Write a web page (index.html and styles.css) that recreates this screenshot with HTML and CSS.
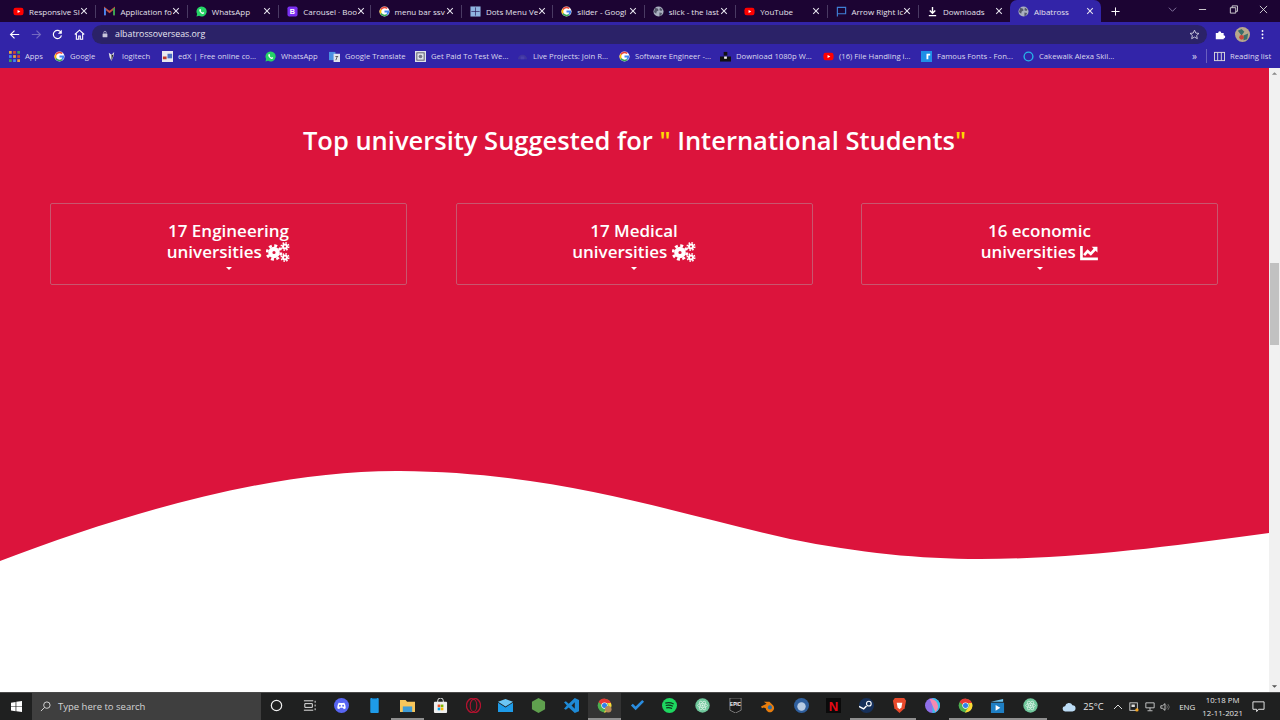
FILE: index.html
```html
<!DOCTYPE html>
<html lang="en">
<head>
  <meta charset="UTF-8">
  <title>Albatross</title>
  <link rel="stylesheet" href="styles.css">
</head>
<body>
<svg class="defs" width="0" height="0">
  <symbol id="i-google" viewBox="0 0 24 24">
    <circle cx="12" cy="12" r="11" fill="#fff"/>
    <path d="M12 5a7 7 0 0 1 4.700 1.800L19 4.400A11 11 0 0 0 2.800 6.500l3 2.300A7 7 0 0 1 12 5z" fill="#ea4335"/>
    <path d="M5.800 8.800l-3-2.300a11 11 0 0 0 0 11l3-2.300a7 7 0 0 1 0-6.400z" fill="#fbbc05"/>
    <path d="M5.800 15.200l-3 2.300A11 11 0 0 0 19 19.600l-2.800-2.200A7 7 0 0 1 5.800 15.200z" fill="#34a853"/>
    <path d="M12 10v4h6a6 6 0 0 1-1.800 3.400l2.800 2.200a11 11 0 0 0 3-9.600H12z" fill="#4285f4"/>
  </symbol>
  <symbol id="i-youtube" viewBox="0 0 24 24">
    <rect x="1" y="4" width="22" height="16" rx="5" fill="#f00"/>
    <path d="M10 8.500v7l6-3.500z" fill="#fff"/>
  </symbol>
  <symbol id="i-whatsapp" viewBox="0 0 24 24">
    <path d="M12 1a11 11 0 0 0-9.500 16.500L1 23l5.700-1.500A11 11 0 1 0 12 1z" fill="#25d366"/>
    <path d="M8.500 6.500c-1.800 1.200-1.800 3.500-.3 5.800 1.600 2.500 4.200 4.700 6.700 4.900 1.600.1 3-1 3-2.500l-2.700-1.400-1.200 1.300c-1.500-.6-3-2-3.800-3.700l1-1.200-1.200-2.900z" fill="#fff"/>
  </symbol>
  <symbol id="i-globe" viewBox="0 0 24 24">
    <circle cx="12" cy="12" r="11" fill="#aab0c0"/>
    <path d="M5 4l6 2 1 4-4 2-1 5-5-4zM15 3l6 5-3 3-4-2zM14 14l6 1-3 6-3 1z" fill="#55586a"/>
  </symbol>
  <symbol id="i-chrome" viewBox="0 0 24 24">
    <circle cx="12" cy="12" r="11" fill="#4caf50"/>
    <path d="M2.500 6.500A11 11 0 0 1 22.300 8H12a4 4 0 0 0-4 3z" fill="#e53935"/>
    <path d="M22.300 8A11 11 0 0 1 11 23l5-7.500a4 4 0 0 0-.5-7.500z" fill="#fdd835"/>
    <circle cx="12" cy="12" r="5" fill="#fff"/>
    <circle cx="12" cy="12" r="4" fill="#2f80ed"/>
  </symbol>
  <symbol id="i-atom" viewBox="0 0 24 24">
    <circle cx="12" cy="12" r="11.500" fill="#6fc79b"/>
    <g fill="none" stroke="#e4f5ec" stroke-width="1">
      <ellipse cx="12" cy="12" rx="8" ry="3.200"/>
      <ellipse cx="12" cy="12" rx="8" ry="3.200" transform="rotate(60 12 12)"/>
      <ellipse cx="12" cy="12" rx="8" ry="3.200" transform="rotate(120 12 12)"/>
    </g>
    <circle cx="12" cy="12" r="1.600" fill="#e4f5ec"/>
  </symbol>
  <symbol id="i-close" viewBox="0 0 10 10">
    <path d="M1.500 1.500l7 7M8.500 1.500l-7 7" stroke="#e6e3ee" stroke-width="1.300" fill="none"/>
  </symbol>
  <symbol id="i-gears" viewBox="0 0 24 20">
    <g fill="none" stroke="#fff">
      <circle cx="8" cy="10.500" r="3.700" stroke-width="4.200"/>
      <circle cx="8" cy="10.500" r="6.900" stroke-width="2.600" stroke-dasharray="3 2.420"/>
      <circle cx="19" cy="4.500" r="2" stroke-width="2"/>
      <circle cx="19" cy="4.500" r="3.700" stroke-width="1.600" stroke-dasharray="1.500 1.400"/>
      <circle cx="19" cy="15.500" r="2" stroke-width="2"/>
      <circle cx="19" cy="15.500" r="3.700" stroke-width="1.600" stroke-dasharray="1.500 1.400"/>
    </g>
  </symbol>
  <symbol id="i-chart" viewBox="0 0 20 18">
    <path d="M1.500 1v14.700H20" fill="none" stroke="#fff" stroke-width="3"/>
    <path d="M4.500 11.500l4-4.500 3.500 3 5-5.500" fill="none" stroke="#fff" stroke-width="3"/>
    <path d="M13 2h6.500v6.500z" fill="#fff"/>
  </symbol>
</svg>

<div class="tabstrip">
  <div class="tab"><svg class="fav"><use href="#i-youtube"/></svg><span class="tab-title">Responsive Sl</span><svg class="x"><use href="#i-close"/></svg></div>
  <div class="tab">
    <svg class="fav" viewBox="0 0 24 24"><path d="M2 20V5l10 8 10-8v15" fill="none" stroke="#c5503f" stroke-width="4"/><path d="M2 20V5" stroke="#4285f4" stroke-width="4"/><path d="M22 20V5" stroke="#34a853" stroke-width="4"/></svg>
    <span class="tab-title">Application fo</span><svg class="x"><use href="#i-close"/></svg>
  </div>
  <div class="tab"><svg class="fav"><use href="#i-whatsapp"/></svg><span class="tab-title">WhatsApp</span><svg class="x"><use href="#i-close"/></svg></div>
  <div class="tab">
    <svg class="fav" viewBox="0 0 24 24"><rect x="1" y="1" width="22" height="22" rx="4" fill="#7b2ff2"/><text x="12" y="18" class="svg-letter" font-size="16" fill="#fff">B</text></svg>
    <span class="tab-title">Carousel · Boo</span><svg class="x"><use href="#i-close"/></svg>
  </div>
  <div class="tab"><svg class="fav"><use href="#i-google"/></svg><span class="tab-title">menu bar ssv</span><svg class="x"><use href="#i-close"/></svg></div>
  <div class="tab">
    <svg class="fav" viewBox="0 0 24 24"><rect x="1" y="1" width="22" height="22" fill="#8fb4e0"/><path d="M3 12h18M12 3v18" stroke="#2a1b5a" stroke-width="1.500"/></svg>
    <span class="tab-title">Dots Menu Ve</span><svg class="x"><use href="#i-close"/></svg>
  </div>
  <div class="tab"><svg class="fav"><use href="#i-google"/></svg><span class="tab-title">slider - Googl</span><svg class="x"><use href="#i-close"/></svg></div>
  <div class="tab"><svg class="fav"><use href="#i-globe"/></svg><span class="tab-title">slick - the last</span><svg class="x"><use href="#i-close"/></svg></div>
  <div class="tab"><svg class="fav"><use href="#i-youtube"/></svg><span class="tab-title">YouTube</span><svg class="x"><use href="#i-close"/></svg></div>
  <div class="tab">
    <svg class="fav" viewBox="0 0 24 24"><path d="M3 23V3h18v14H3" fill="none" stroke="#3f7fd6" stroke-width="2.500"/></svg>
    <span class="tab-title">Arrow Right Ic</span><svg class="x"><use href="#i-close"/></svg>
  </div>
  <div class="tab no-sep">
    <svg class="fav" viewBox="0 0 24 24"><path d="M12 2v13M6 10l6 6 6-6M4 21h16" fill="none" stroke="#fff" stroke-width="3"/></svg>
    <span class="tab-title">Downloads</span><svg class="x"><use href="#i-close"/></svg>
  </div>
  <div class="tab active"><svg class="fav"><use href="#i-globe"/></svg><span class="tab-title">Albatross</span><svg class="x"><use href="#i-close"/></svg></div>
  <svg class="new-tab" viewBox="0 0 10 10"><path d="M5 .500v9M.500 5h9" stroke="#fff" stroke-width="1.100"/></svg>
  <div class="win-controls">
    <svg viewBox="0 0 10 10"><path d="M1 3l4 4 4-4" fill="none" stroke="#8d7fa8"/></svg>
    <svg viewBox="0 0 10 10"><path d="M1 5h8" stroke="#ddd"/></svg>
    <svg viewBox="0 0 10 10"><path d="M1.500 3h6v6h-6zM3.500 3V1h6v6H7.500" fill="none" stroke="#ddd"/></svg>
    <svg viewBox="0 0 10 10"><path d="M1 1l8 8M9 1l-8 8" stroke="#ddd"/></svg>
  </div>
</div>

<div class="toolbar">
  <svg class="tool" viewBox="0 0 14 14"><path d="M13 7H2M7 2L2 7l5 5" fill="none" stroke="#fff" stroke-width="1.500"/></svg>
  <svg class="tool" viewBox="0 0 14 14"><path d="M1 7h11M7 2l5 5-5 5" fill="none" stroke="#7469c0" stroke-width="1.500"/></svg>
  <svg class="tool" viewBox="0 0 14 14"><path d="M11.500 4.500A5.200 5.200 0 1 0 12 8" fill="none" stroke="#fff" stroke-width="1.500"/><path d="M12.500 1v5h-5z" fill="#fff"/></svg>
  <svg class="tool" viewBox="0 0 14 14"><path d="M1 7l6-5.500L13 7M3 6v7h3V9h2v4h3V6" fill="none" stroke="#fff" stroke-width="1.400"/></svg>
  <div class="omnibox">
    <svg class="lock" viewBox="0 0 10 12"><rect x="1" y="5" width="8" height="6.500" rx="1" fill="#c9c6dc"/><path d="M3 5V3.500a2 2 0 0 1 4 0V5" fill="none" stroke="#c9c6dc" stroke-width="1.200"/></svg>
    <span class="url">albatrossoverseas.org</span>
    <svg class="star" viewBox="0 0 14 14"><path d="M7 1.500l1.700 3.700 4 .4-3 2.700.9 4L7 10.300l-3.600 2 .9-4-3-2.700 4-.4z" fill="none" stroke="#d8d5e8" stroke-width="1.100"/></svg>
  </div>
  <svg class="tool ext" viewBox="0 0 14 14"><path d="M1 5h3a2 2 0 0 1 4 0h3v3a2 2 0 0 1 0 4v1H1z" fill="#fff"/></svg>
  <svg class="avatar" viewBox="0 0 16 16"><circle cx="8" cy="8" r="8" fill="#b8a88c"/><path d="M3 4l4-2 3 3-3 4zM9 9l5-2-1 6-4 1z" fill="#3d6f6a"/><circle cx="7" cy="11" r="2.500" fill="#c7453c"/></svg>
  <svg class="tool menu" viewBox="0 0 14 14"><circle cx="7" cy="2.500" r="1.200" fill="#fff"/><circle cx="7" cy="7" r="1.200" fill="#fff"/><circle cx="7" cy="11.500" r="1.200" fill="#fff"/></svg>
</div>

<div class="bookmarks">
  <div class="bm">
    <svg class="bm-ic" viewBox="0 0 12 12">
      <g fill="#e8a33d"><rect width="3" height="3"/><rect x="4.500" width="3" height="3" fill="#d2453c"/><rect x="9" width="3" height="3" fill="#3f9e5a"/></g>
      <g fill="#4285f4"><rect y="4.500" width="3" height="3"/><rect x="4.500" y="4.500" width="3" height="3" fill="#e8a33d"/><rect x="9" y="4.500" width="3" height="3" fill="#d2453c"/></g>
      <g fill="#3f9e5a"><rect y="9" width="3" height="3"/><rect x="4.500" y="9" width="3" height="3" fill="#4285f4"/><rect x="9" y="9" width="3" height="3" fill="#e8a33d"/></g>
    </svg>
    <span>Apps</span>
  </div>
  <div class="bm"><svg class="bm-ic"><use href="#i-google"/></svg><span>Google</span></div>
  <div class="bm"><svg class="bm-ic" viewBox="0 0 12 12"><path d="M3 2l3 2 3-3-1 5-2 5-2-4z" fill="#e8e8e8"/><path d="M6 4l2 0-2 7z" fill="#222"/></svg><span>logitech</span></div>
  <div class="bm"><svg class="bm-ic" viewBox="0 0 12 12"><rect width="12" height="12" fill="#e9e9ef"/><path d="M1 6h4v3H1z" fill="#c0392b"/><path d="M6 3h5v5H6z" fill="#4b6fc4"/></svg><span>edX | Free online co...</span></div>
  <div class="bm"><svg class="bm-ic"><use href="#i-whatsapp"/></svg><span>WhatsApp</span></div>
  <div class="bm"><svg class="bm-ic" viewBox="0 0 12 12"><rect y="1" width="7" height="9" fill="#4a90e2"/><rect x="5" y="3" width="7" height="9" fill="#dfe5ee"/><path d="M7 6h3M9 6l-1.500 4" stroke="#555" fill="none"/></svg><span>Google Translate</span></div>
  <div class="bm"><svg class="bm-ic" viewBox="0 0 12 12"><rect width="12" height="12" fill="#dfe3ea"/><rect x="2" y="2" width="8" height="8" fill="none" stroke="#556"/><circle cx="6" cy="6" r="2" fill="#778"/></svg><span>Get Paid To Test We...</span></div>
  <div class="bm"><svg class="bm-ic" viewBox="0 0 12 12"><path d="M1 9a5 5 0 0 1 10 0z" fill="#3f359f"/><path d="M4 9V6h4v3" fill="#4a40ad"/></svg><span>Live Projects: Join R...</span></div>
  <div class="bm"><svg class="bm-ic"><use href="#i-google"/></svg><span>Software Engineer -...</span></div>
  <div class="bm"><svg class="bm-ic" viewBox="0 0 12 12"><rect x="4" y="1" width="4" height="4" fill="#111"/><rect y="6" width="12" height="5.500" fill="#111"/><rect x="4.500" y="6" width="3" height="2.500" fill="#eee"/></svg><span>Download 1080p W...</span></div>
  <div class="bm"><svg class="bm-ic"><use href="#i-youtube"/></svg><span>(16) File Handling i...</span></div>
  <div class="bm"><svg class="bm-ic" viewBox="0 0 12 12"><rect width="12" height="12" fill="#1f8fe6"/><path d="M6 3h4v2H8v4H6z" fill="#fff"/></svg><span>Famous Fonts - Fon...</span></div>
  <div class="bm"><svg class="bm-ic" viewBox="0 0 12 12"><circle cx="6" cy="6" r="4.800" fill="none" stroke="#27b4e8" stroke-width="1.500"/></svg><span>Cakewalk Alexa Skil...</span></div>
  <span class="bm-more">»</span>
  <div class="bm-reading">
    <svg class="bm-ic" viewBox="0 0 12 12"><rect x=".500" y="1.500" width="11" height="9" fill="none" stroke="#ddd"/><path d="M4 1.500v9M8 1.500v9" stroke="#ddd"/></svg>
    <span>Reading list</span>
  </div>
</div>

<div class="viewport">
  <main class="page">
    <section class="hero">
      <h2 class="hero-title">Top university Suggested for <span class="quote">"</span> International Students<span class="quote">"</span></h2>
      <div class="cards">
        <div class="card">
          <div class="card-label">17 Engineering<br>universities <svg class="card-ic gears"><use href="#i-gears"/></svg></div>
          <span class="caret"></span>
        </div>
        <div class="card">
          <div class="card-label">17 Medical<br>universities <svg class="card-ic gears"><use href="#i-gears"/></svg></div>
          <span class="caret"></span>
        </div>
        <div class="card">
          <div class="card-label">16 economic<br>universities <svg class="card-ic chart"><use href="#i-chart"/></svg></div>
          <span class="caret"></span>
        </div>
      </div>
    </section>
    <svg class="wave" viewBox="0 0 1269 100" preserveAspectRatio="none">
      <path d="M0 96C120 50 270 5 400 6C560 7 680 50 790 74C860 88 920 94 980 94C1080 94 1180 80 1269 68V0H0z" fill="#dc143c"/>
    </svg>
  </main>
  <div class="scrollbar">
    <svg class="sb-arrow" viewBox="0 0 8 5"><path d="M4 1L7 4H1z" fill="#8a8a8a"/></svg>
    <div class="sb-track"><div class="sb-thumb"></div></div>
    <svg class="sb-arrow" viewBox="0 0 8 5"><path d="M4 4L1 1h6z" fill="#555"/></svg>
  </div>
</div>

<footer class="taskbar">
  <div class="start"><svg viewBox="0 0 12 12"><path d="M0 1.800L5 1v4.700H0zM5.800.900L12 0v5.700H5.800zM0 6.400h5v4.700l-5-.8zM5.800 6.400H12V12l-6.200-.9z" fill="#fff"/></svg></div>
  <div class="search">
    <svg viewBox="0 0 12 12"><circle cx="7.500" cy="4.500" r="3.500" fill="none" stroke="#ddd"/><path d="M5 7L1 11" stroke="#ddd"/></svg>
    <span>Type here to search</span>
  </div>
  <div class="apps">
    <div class="app"><svg viewBox="0 0 16 16"><circle cx="8" cy="8" r="5.500" fill="none" stroke="#eee" stroke-width="1.300"/></svg></div>
    <div class="app"><svg viewBox="0 0 16 16"><path d="M2 3h10M2 13h10M3 6h8v4H3zM14 3v2M14 7v2M14 11v2" fill="none" stroke="#eee"/></svg></div>
    <div class="app"><svg viewBox="0 0 16 16"><circle cx="8" cy="8" r="8" fill="#5865f2"/><path d="M3.500 11c0-3 .8-5 1.500-6l2 .4h2l2-.4c.7 1 1.500 3 1.500 6l-2 1-1-1.500H6.500L5.500 12z" fill="#fff"/><circle cx="6.300" cy="8.300" r="1" fill="#5865f2"/><circle cx="9.700" cy="8.300" r="1" fill="#5865f2"/></svg></div>
    <div class="app"><svg viewBox="0 0 16 16"><rect x="3.500" width="9" height="16" rx="1" fill="#1e9be8"/><rect x="5.500" y="0" width="5" height="1.200" fill="#0d5f94"/></svg></div>
    <div class="app active-app"><svg viewBox="0 0 16 16"><path d="M0 2h6l1.500 2H16v11H0z" fill="#f6c65b"/><rect x="3" y="9" width="10" height="6" fill="#3e9cd6"/></svg></div>
    <div class="app"><svg viewBox="0 0 16 16"><path d="M5 5V3a3 3 0 0 1 6 0v2" fill="none" stroke="#eee"/><rect x="1" y="4" width="14" height="12" rx="1" fill="#eee"/><rect x="5" y="7" width="2.800" height="2.800" fill="#f25022"/><rect x="8.300" y="7" width="2.800" height="2.800" fill="#7fba00"/><rect x="5" y="10.300" width="2.800" height="2.800" fill="#00a4ef"/><rect x="8.300" y="10.300" width="2.800" height="2.800" fill="#ffb900"/></svg></div>
    <div class="app"><svg viewBox="0 0 16 16"><ellipse cx="8" cy="8" rx="7.500" ry="8" fill="none" stroke="#b3122f" stroke-width="1.400"/><ellipse cx="8" cy="8" rx="3.500" ry="6.500" fill="none" stroke="#b3122f" stroke-width="1.200"/></svg></div>
    <div class="app"><svg viewBox="0 0 16 16"><path d="M0 5l8 5 8-5v10H0z" fill="#1e9be8"/><path d="M0 4l8-3 8 3-8 5z" fill="#6cc6f5"/></svg></div>
    <div class="app"><svg viewBox="0 0 16 16"><path d="M8 0l7 4v8l-7 4-7-4V4z" fill="#5fa04e"/></svg></div>
    <div class="app"><svg viewBox="0 0 16 16"><path d="M11.500 0L16 2v12l-4.500 2L5 10l-3 2.500L0 11.500 3 8 0 4.500 2 3.500 5 6zm0 4.500L8 8l3.500 3.500z" fill="#1e8ad6"/></svg></div>
    <div class="app active-app wide"><svg viewBox="0 0 16 16"><use href="#i-chrome"/><circle cx="12" cy="12" r="3.500" fill="#b58a5a"/></svg></div>
    <div class="app"><svg viewBox="0 0 16 16"><path d="M1 8l2-2 3 3 7-7 2 2-9 9z" fill="#2a8de0"/></svg></div>
    <div class="app"><svg viewBox="0 0 16 16"><circle cx="8" cy="8" r="8" fill="#1ed760"/><path d="M3.500 5.500c3-1 6-.7 9 .8M4 8c2.500-.7 5.300-.4 7.600.8M4.500 10.500c2-.5 4.300-.3 6.200.7" fill="none" stroke="#0b3b1d" stroke-width="1.200"/></svg></div>
    <div class="app"><svg viewBox="0 0 16 16"><use href="#i-atom"/></svg></div>
    <div class="app"><svg viewBox="0 0 16 16"><path d="M2 0h12v13l-6 3-6-3z" fill="#1b1b1b" stroke="#ddd" stroke-width=".500"/><text x="8" y="8" class="svg-letter" font-size="5" fill="#fff">EPIC</text></svg></div>
    <div class="app"><svg viewBox="0 0 16 16"><path d="M0 9l6-3-3-2h6l3 3a4.500 4.500 0 1 1-7 4l-2-1-2 1z" fill="#e87d0d"/><circle cx="9.500" cy="10" r="2.200" fill="#2a6ea8"/></svg></div>
    <div class="app"><svg viewBox="0 0 16 16"><circle cx="8" cy="8" r="8" fill="#2f5f9e"/><circle cx="8" cy="9" r="4.500" fill="#b7cbe4"/></svg></div>
    <div class="app"><svg viewBox="0 0 16 16"><rect width="16" height="16" fill="#0a0a0a"/><text x="8" y="14" class="svg-letter" font-size="14" fill="#e50914">N</text></svg></div>
    <div class="app active-app"><svg viewBox="0 0 16 16"><circle cx="8" cy="8" r="8" fill="#16305a"/><circle cx="10.500" cy="6" r="2.500" fill="none" stroke="#fff" stroke-width="1.200"/><path d="M0 9l5 2.500 3-3" stroke="#fff" stroke-width="1.500" fill="none"/></svg></div>
    <div class="app active-app"><svg viewBox="0 0 16 16"><path d="M3 0h10l2 3-1.500 8L8 16l-5.500-5L1 3z" fill="#e8492b"/><path d="M5 5h6l-1 5-2 2-2-2z" fill="#fff"/></svg></div>
    <div class="app"><svg viewBox="0 0 16 16"><circle cx="8" cy="8" r="8" fill="#8f6fe8"/><path d="M8 0a8 8 0 0 1 0 16z" fill="#36c2e8"/><path d="M5 1a8 8 0 0 1 6 14L8 8z" fill="#f58ab0"/></svg></div>
    <div class="app active-app"><svg viewBox="0 0 16 16"><use href="#i-chrome"/></svg></div>
    <div class="app active-app"><svg viewBox="0 0 16 16"><path d="M1 4l13-3v3H1z" fill="#6cc6f5"/><rect x="1" y="5" width="14" height="11" fill="#1e7fc4"/><path d="M6 7.500v6l5-3z" fill="#fff"/></svg></div>
    <div class="app active-app"><svg viewBox="0 0 16 16"><use href="#i-atom"/></svg></div>
  </div>
  <div class="tray">
    <svg class="cloud" viewBox="0 0 16 10"><path d="M4 10a3 3 0 0 1-.5-6A4.500 4.500 0 0 1 12 3a3.500 3.500 0 0 1 0 7z" fill="#bcdcf5"/></svg>
    <span class="temp">25°C</span>
    <svg class="tray-ic chev" viewBox="0 0 10 6"><path d="M1 5l4-4 4 4" fill="none" stroke="#ddd"/></svg>
    <svg class="tray-ic" viewBox="0 0 12 12"><rect x="1" y="1" width="9" height="9" fill="none" stroke="#ddd"/><rect x="3" y="3" width="4" height="3" fill="#ddd"/><circle cx="9.500" cy="9.500" r="2" fill="#f5a623"/></svg>
    <svg class="tray-ic" viewBox="0 0 12 12"><path d="M1 1h10v6H1zM6 7v3M3 10.500h6" fill="none" stroke="#ddd"/></svg>
    <svg class="tray-ic last" viewBox="0 0 12 12"><path d="M1 4.500h2L6 2v8L3 7.500H1z" fill="none" stroke="#ddd"/><path d="M8 4a3 3 0 0 1 0 4M9.500 2.500a5 5 0 0 1 0 7" fill="none" stroke="#777"/></svg>
    <span class="lang">ENG</span>
    <div class="clock"><span>10:18 PM</span><span>12-11-2021</span></div>
    <svg class="notif" viewBox="0 0 14 14"><path d="M1 2h12v8H7l-2 2.500V10H1z" fill="none" stroke="#eee"/></svg>
  </div>
</footer>
</body>
</html>
```

FILE: styles.css
```css
* { box-sizing: border-box; }
html, body { height: 100%; }
body {
  margin: 0;
  width: 1280px;
  height: 720px;
  overflow: hidden;
  display: flex;
  flex-direction: column;
  font-family: "Open Sans", "Noto Sans", sans-serif;
  background: #fff;
}
.defs { position: absolute; }
.svg-letter { font-family: "Liberation Sans", sans-serif; font-weight: bold; text-anchor: middle; }

/* browser tabs */
.tabstrip {
  height: 22px;
  display: flex;
  align-items: center;
  padding-left: 5px;
  background: #1c0433;
  color: #e4e1ec;
  font-size: 8px;
}
.tab {
  width: 91.4px;
  height: 13px;
  display: flex;
  align-items: center;
  padding: 0 7px 0 8px;
  border-right: 1px solid #4a3a63;
  flex-shrink: 0;
}
.tab.no-sep { border-right: none; width: 91px; }
.tab.active {
  width: 91px;
  height: 22px;
  background: #3224a8;
  border-right: none;
  border-radius: 7px 7px 0 0;
}
.fav { width: 11px; height: 11px; flex-shrink: 0; }
.tab-title {
  flex: 1;
  margin-left: 5px;
  white-space: nowrap;
}
.x { width: 8px; height: 8px; flex-shrink: 0; }
.new-tab { width: 9px; height: 9px; margin-left: 10px; }
.win-controls {
  margin-left: auto;
  display: flex;
  gap: 21.5px;
  padding-right: 12px;
  margin-top: -4px;
}
.win-controls svg { width: 9px; height: 9px; display: block; }

/* address bar */
.toolbar {
  height: 24px;
  display: flex;
  align-items: center;
  padding-left: 9px;
  background: #3224a8;
}
.tool { width: 11px; height: 11px; margin-right: 10.5px; flex-shrink: 0; }
.omnibox {
  width: 1115px;
  height: 19px;
  margin-left: -3px;
  padding: 0 7px 0 10px;
  border-radius: 10px;
  background: #2b2268;
  display: flex;
  align-items: center;
  color: #e8e6f2;
  font-size: 8.8px;
}
.lock { width: 6px; height: 8px; }
.url { margin-left: 7px; }
.star { width: 11px; height: 11px; margin-left: auto; }
.tool.ext { margin: 0 0 0 8px; }
.avatar { width: 15px; height: 15px; margin-left: 9px; }
.tool.menu { margin: 0 0 0 7px; }

/* bookmarks */
.bookmarks {
  height: 22px;
  padding: 0 0 2px 9px;
  background: #3224a8;
  color: #dcd9ee;
  font-size: 7.7px;
  display: grid;
  grid-template-columns: 45px 52px 56px 103px 64px 86px 102px 102px 101px 103px 98px 102px 169px 14px 1fr;
  align-items: center;
}
.bm, .bm-reading { display: flex; align-items: center; gap: 5px; white-space: nowrap; }
.bm-ic { width: 11px; height: 11px; flex-shrink: 0; }
.bm-more { font-size: 10px; }
.bm-reading { border-left: 1px solid #6a5fc0; padding-left: 7px; height: 14px; }

/* page */
.viewport {
  flex: 1;
  display: flex;
  min-height: 0;
}
.page { flex: 1; background: #fff; }
.hero {
  height: 397px;
  padding: 51px 50px 0;
  background: #dc143c;
  color: #fff;
}
.hero-title {
  margin: 0;
  text-align: center;
  font-size: 25.5px;
  line-height: 42px;
  font-weight: 600;
}
.quote { color: #ffd800; }
.cards {
  margin-top: 42px;
  display: grid;
  grid-template-columns: repeat(3, 357px);
  column-gap: 48.5px;
}
.card {
  height: 82px;
  padding-top: 16px;
  border: 1.5px solid #c8566e;
  border-radius: 2px;
  text-align: center;
}
.card-label {
  font-size: 17px;
  line-height: 21px;
  font-weight: 600;
}
.card-ic { vertical-align: -3px; }
.card-ic.gears { width: 24px; height: 20px; vertical-align: -4px; }
.card-ic.chart { width: 18px; height: 16px; }
.caret {
  display: block;
  width: 0;
  margin: 5px auto 0;
  border: 3px solid transparent;
  border-top-color: #fff;
  border-bottom: none;
}
.wave { display: block; width: 100%; height: 100px; }

.scrollbar {
  width: 11px;
  background: #f1f1f1;
  display: flex;
  flex-direction: column;
  align-items: center;
  padding: 3px 0;
}
.sb-arrow { width: 7px; height: 5px; flex-shrink: 0; }
.sb-track { flex: 1; width: 100%; padding: 187px 1px 0; }
.sb-thumb { height: 82px; background: #c1c1c1; }

/* windows taskbar */
.taskbar {
  height: 28px;
  display: flex;
  align-items: stretch;
  background: #1f2020;
  color: #e6e6e6;
  font-size: 10px;
  border-top: 1px solid #4a4a4a;
}
.start { width: 32px; display: flex; align-items: center; justify-content: center; }
.start svg { width: 11px; height: 11px; }
.search {
  width: 229px;
  background: #3f3f3f;
  display: flex;
  align-items: center;
  padding-left: 8px;
  gap: 7px;
  font-size: 9.5px;
  color: #d5d5d5;
}
.search svg { width: 11px; height: 11px; }
.apps { display: flex; margin-left: -1px; }
.app {
  width: 32.800px;
  display: flex;
  align-items: center;
  justify-content: center;
  border-bottom: 2px solid transparent;
}
.app svg { width: 15px; height: 15px; }
.app.active-app { border-bottom-color: #8f8f8f; }
.app.wide { background: #333; }
.tray {
  flex: 1;
  display: flex;
  align-items: center;
  padding-left: 15px;
}
.cloud { width: 14px; height: 10px; }
.temp { margin-left: 7px; font-size: 9.3px; width: 19px; }
.tray-ic { width: 10px; height: 10px; margin-left: 6px; }
.tray-ic.chev { margin-left: 11px; }
.tray-ic.last { margin-left: 5px; }
.lang { margin-left: 9px; font-size: 8px; width: 14px; }
.clock {
  margin-left: 10px;
  width: 39px;
  display: flex;
  flex-direction: column;
  align-items: center;
  font-size: 7.8px;
  line-height: 13px;
  white-space: nowrap;
}
.notif { width: 13px; height: 13px; margin-left: 10px; }
```
